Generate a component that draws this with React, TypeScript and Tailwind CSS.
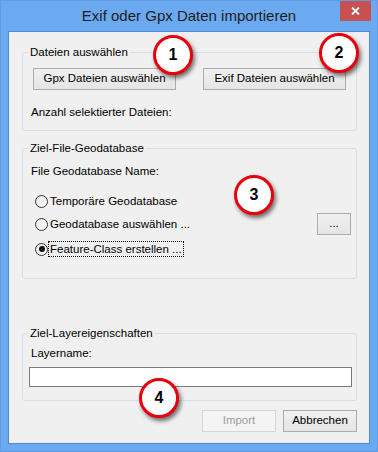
import React from "react";

const font = { fontFamily: '"Liberation Sans", Arial, sans-serif' };

function Callout({ n, className }: { n: string; className: string }) {
  return (
    <div
      className={`absolute flex h-[40px] w-[40px] items-center justify-center rounded-full border-[3px] border-[#e8000b] bg-white text-[16px] font-bold text-black shadow-[2px_3px_4px_rgba(0,0,0,0.55)] ${className}`}
    >
      {n}
    </div>
  );
}

function WinButton({
  children,
  className = "",
  disabled = false,
}: {
  children: React.ReactNode;
  className?: string;
  disabled?: boolean;
}) {
  return (
    <button
      disabled={disabled}
      className={`flex h-[22px] items-center justify-center border text-[11.5px] leading-none ${
        disabled
          ? "border-[#d5d5d5] bg-[#f4f4f4] text-[#9d9d9d]"
          : "border-[#acacac] bg-gradient-to-b from-[#f0f0f0] to-[#e5e5e5] text-black"
      } ${className}`}
    >
      {children}
    </button>
  );
}

function Radio({ label, checked = false, focused = false }: { label: string; checked?: boolean; focused?: boolean }) {
  return (
    <div className="flex h-[16px] items-center">
      <span className="flex h-[13px] w-[13px] items-center justify-center rounded-full border border-[#333] bg-gradient-to-br from-[#e6e6e6] to-white">
        {checked && <span className="h-[6px] w-[6px] rounded-full bg-[#111]" />}
      </span>
      <span
        className={`ml-[1px] px-[1px] text-[11.5px] leading-[14px] ${
          focused ? "outline-1 outline-dotted outline-black" : ""
        }`}
      >
        {label}
      </span>
    </div>
  );
}

function Group({
  title,
  className = "",
  children,
}: {
  title: string;
  className?: string;
  children: React.ReactNode;
}) {
  return (
    <fieldset className={`rounded-[3px] border border-[#d5dfe5] ${className}`}>
      <legend className="ml-[5px] px-[2px] text-[11.5px] leading-[14px]">{title}</legend>
      {children}
    </fieldset>
  );
}

export default function App() {
  return (
    <div
      style={font}
      className="relative flex h-[452px] w-[378px] flex-col border border-[#5d9be2] bg-[#6ba9f0] text-black"
    >
      {/* title bar */}
      <div className="relative flex h-[30px] items-center justify-center">
        <span className="mt-[1px] text-[15px] text-[#1e1e1e]">Exif oder Gpx Daten importieren</span>
        <div className="absolute right-[6px] top-0 flex h-[20px] w-[31px] items-center justify-center bg-[#c75050]">
          <svg width="9" height="8" viewBox="0 0 9 8">
            <path d="M1 0.5 L8 7.5 M8 0.5 L1 7.5" stroke="white" strokeWidth="1.8" />
          </svg>
        </div>
      </div>

      {/* client area */}
      <div className="mx-[7px] mb-[7px] flex flex-1 flex-col border border-[#4d8ad3] bg-[#f0f0f0] pl-[13px] pr-[12px] pt-[13px]">
        <Group title="Dateien auswählen" className="pb-[11px]">
          <div className="mt-[9px] flex pl-[10px]">
            <WinButton className="w-[143px]">Gpx Dateien auswählen</WinButton>
            <WinButton className="ml-[27px] w-[143px]">Exif Dateien auswählen</WinButton>
          </div>
          <div className="mt-[15px] pl-[8px] text-[11.5px] leading-[14px]">Anzahl selektierter Dateien:</div>
        </Group>

        <Group title="Ziel-File-Geodatabase" className="mt-[10px] pb-[21px]">
          <div className="mt-[9px] pl-[8px] text-[11.5px] leading-[14px]">File Geodatabase Name:</div>
          <div className="mt-[15px] flex flex-col pl-[12px] pr-[5px]">
            <Radio label="Temporäre Geodatabase" />
            <div className="mt-[7px] flex h-[16px] items-center justify-between">
              <Radio label="Geodatabase auswählen ..." />
              <WinButton className="-my-[3px] w-[34px]">...</WinButton>
            </div>
            <div className="mt-[9px]">
              <Radio label="Feature-Class erstellen ..." checked focused />
            </div>
          </div>
        </Group>

        <Group title="Ziel-Layereigenschaften" className="mt-[47px] pb-[13px]">
          <div className="mt-[6px] pl-[8px] text-[11.5px] leading-[14px]">Layername:</div>
          <div className="mt-[7px] pl-[6px] pr-[4px]">
            <input className="block h-[20px] w-full border border-[#7a7a7a] bg-white outline-none" />
          </div>
        </Group>

        <div className="mt-[9px] flex justify-end gap-[7px]">
          <WinButton disabled className="w-[74px]">Import</WinButton>
          <WinButton className="w-[74px]">Abbrechen</WinButton>
        </div>
      </div>

      <Callout n="1" className="left-[152px] top-[34px]" />
      <Callout n="2" className="left-[318px] top-[32px]" />
      <Callout n="3" className="left-[233px] top-[174px]" />
      <Callout n="4" className="left-[138px] top-[377px]" />
    </div>
  );
}
